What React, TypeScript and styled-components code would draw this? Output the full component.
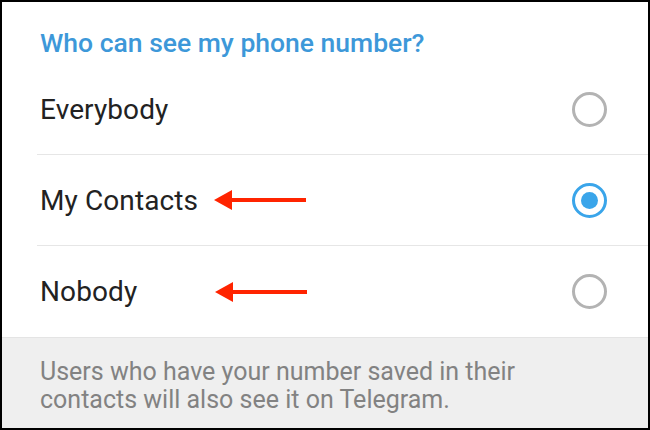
import React from "react";
import styled, { createGlobalStyle } from "styled-components";

const Global = createGlobalStyle`
    html, body {
        margin: 0;
        padding: 0;
        background: #fff;
    }
    * { box-sizing: border-box; }
`

const Frame = styled.div`
    width: 650px;
    height: 430px;
    border: 2px solid #000;
    display: flex;
    flex-direction: column;
    font-family: Roboto, "Noto Sans", sans-serif;
    overflow: hidden;
`

const Panel = styled.div`
    background: #fff;
    display: flex;
    flex-direction: column;
`

const Title = styled.div`
    height: 62px;
    padding: 26px 0 0 38px;
    color: #3d98d9;
    font-size: 26.5px;
    font-weight: 500;
    line-height: 30px;
`

const Row = styled.div<{ $last?: boolean }>`
    height: 91px;
    margin-left: 35px;
    padding: 0 41px 0 3px;
    display: flex;
    align-items: center;
    border-bottom: ${p => p.$last ? "none" : "1px solid #e6e6e6"};
`

const Label = styled.span`
    font-size: 28px;
    color: #222;
    letter-spacing: 0.1px;
`

const Arrow = styled.svg`
    flex-shrink: 0;
`

const Spacer = styled.div`
    flex: 1;
`

const Radio = styled.div<{ $checked?: boolean }>`
    width: 35px;
    height: 35px;
    border-radius: 50%;
    border: 3px solid ${p => p.$checked ? "#3aa5ea" : "#b3b3b3"};
    display: flex;
    align-items: center;
    justify-content: center;

    &::after {
        content: "";
        display: ${p => p.$checked ? "block" : "none"};
        width: 17px;
        height: 17px;
        border-radius: 50%;
        background: #3aa5ea;
    }
`

const Footer = styled.div`
    flex: 1;
    background: #efefef;
    border-top: 1px solid #e4e4e4;
    padding: 20px 0 0 38px;
    color: #828282;
    font-size: 25px;
    line-height: 28px;
`

const RedArrow = ({ gap }: { gap: number }) => (
    <Arrow width="94" height="22" viewBox="0 0 94 22" style={{ marginLeft: gap }}>
        <polygon points="0,11 18,1 18,21" fill="#ff2400" />
        <rect x="16" y="9" width="76" height="4" fill="#ff2400" />
    </Arrow>
)

export default function App() {
    return (
        <>
            <Global />
            <Frame>
                <Panel>
                    <Title>Who can see my phone number?</Title>
                    <Row>
                        <Label>Everybody</Label>
                        <Spacer />
                        <Radio />
                    </Row>
                    <Row>
                        <Label>My Contacts</Label>
                        <RedArrow gap={16} />
                        <Spacer />
                        <Radio $checked />
                    </Row>
                    <Row $last>
                        <Label>Nobody</Label>
                        <RedArrow gap={78} />
                        <Spacer />
                        <Radio />
                    </Row>
                </Panel>
                <Footer>
                    Users who have your number saved in their<br />
                    contacts will also see it on Telegram.
                </Footer>
            </Frame>
        </>
    )
}
